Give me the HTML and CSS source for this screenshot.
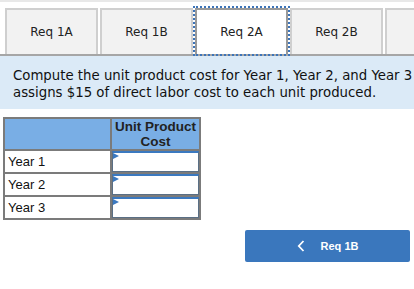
FILE: index.html
```html
<!DOCTYPE html>
<html lang="en">
<head>
    <meta charset="UTF-8">
    <meta name="viewport" content="width=device-width, initial-scale=1.0">
    <title>Req 2A</title>
    <link rel="stylesheet" href="styles.css">
</head>
<body>
    <div class="topline"></div>
    <div class="tabs">
        <div class="tab">Req 1A</div>
        <div class="tab">Req 1B</div>
        <div class="tab active">Req 2A</div>
        <div class="tab">Req 2B</div>
        <div class="tab"></div>
    </div>

    <div class="prompt">
        <p>Compute the unit product cost for Year 1, Year 2, and Year 3</p>
        <p>assigns $15 of direct labor cost to each unit produced.</p>
    </div>

    <table class="cost-table">
        <tr>
            <th class="label-col"></th>
            <th class="value-col">Unit Product<br>Cost</th>
        </tr>
        <tr>
            <td class="label">Year 1</td>
            <td class="entry"><div class="input-box"></div></td>
        </tr>
        <tr>
            <td class="label">Year 2</td>
            <td class="entry"><div class="input-box"></div></td>
        </tr>
        <tr>
            <td class="label">Year 3</td>
            <td class="entry"><div class="input-box"></div></td>
        </tr>
    </table>

    <div class="nav">
        <button class="prev-btn">
            <svg class="chev" width="8" height="12" viewBox="0 0 8 12"><path d="M6.5 1 L1.8 6 L6.5 11" fill="none" stroke="white" stroke-width="1.8"/></svg>
            Req 1B
        </button>
    </div>
</body>
</html>
```

FILE: styles.css
```css
body {
    margin: 0;
    font-family: "DejaVu Sans", Verdana, sans-serif;
    background-color: white;
    overflow: hidden;
}
.topline {
    height: 2px;
    background-color: #e8e8e8;
}
.tabs {
    display: flex;
    gap: 2px;
    padding: 6px 0 0 5px;
    border-bottom: 2px solid #a6a6a6;
    height: 46px;
}
.tab {
    flex: 0 0 93px;
    box-sizing: border-box;
    display: flex;
    align-items: center;
    justify-content: center;
    background-color: #f2f2f2;
    border: 2px solid #cfcfcf;
    border-bottom: none;
    font-size: 12px;
    color: #222;
}
.tab:last-child {
    flex: 1 0 0;
    border-right: none;
}
.tab.active {
    position: relative;
    z-index: 1;
    background-color: white;
    outline: 2px dotted #3d74b8;
    outline-offset: 0;
    border-color: #9a9a9a;
}
.prompt {
    background-color: #dbeaf7;
    padding: 11px 0 8px 13px;
    font-size: 13.3px;
    color: #111;
}
.prompt p {
    margin: 0;
    line-height: 17px;
    white-space: nowrap;
}
.cost-table {
    margin: 8px 0 0 3px;
    border-collapse: collapse;
    font-family: "Liberation Sans", Arial, sans-serif;
    font-size: 13px;
}
.cost-table th {
    background-color: #79aee5;
    border: 2px solid #7b7b7b;
    height: 30px;
    padding: 0;
    font-size: 13.5px;
    line-height: 15px;
    color: #222;
}
.label-col {
    width: 105px;
}
.value-col {
    width: 87px;
}
.cost-table td {
    border: 2px solid #7b7b7b;
    padding: 0;
    height: 21px;
}
.label {
    padding-left: 3px !important;
    color: #111;
}
.entry {
    background-color: white;
}
.input-box {
    position: relative;
    height: 18px;
    border: 1px solid #5a6f85;
    border-top: 2px solid #3b79c0;
}
.input-box::before {
    content: "";
    position: absolute;
    left: 0;
    top: 0;
    border-left: 6px solid #3b79c0;
    border-top: 3px solid transparent;
    border-bottom: 3px solid transparent;
}
.nav {
    padding: 10px 0 0 245px;
}
.prev-btn {
    display: flex;
    align-items: center;
    justify-content: center;
    width: 165px;
    height: 32px;
    background-color: #3a77bd;
    color: white;
    border: none;
    border-radius: 2px;
    font-family: "Liberation Sans", Arial, sans-serif;
    font-weight: bold;
    font-size: 11px;
}
.chev {
    margin-right: 16px;
}
```
